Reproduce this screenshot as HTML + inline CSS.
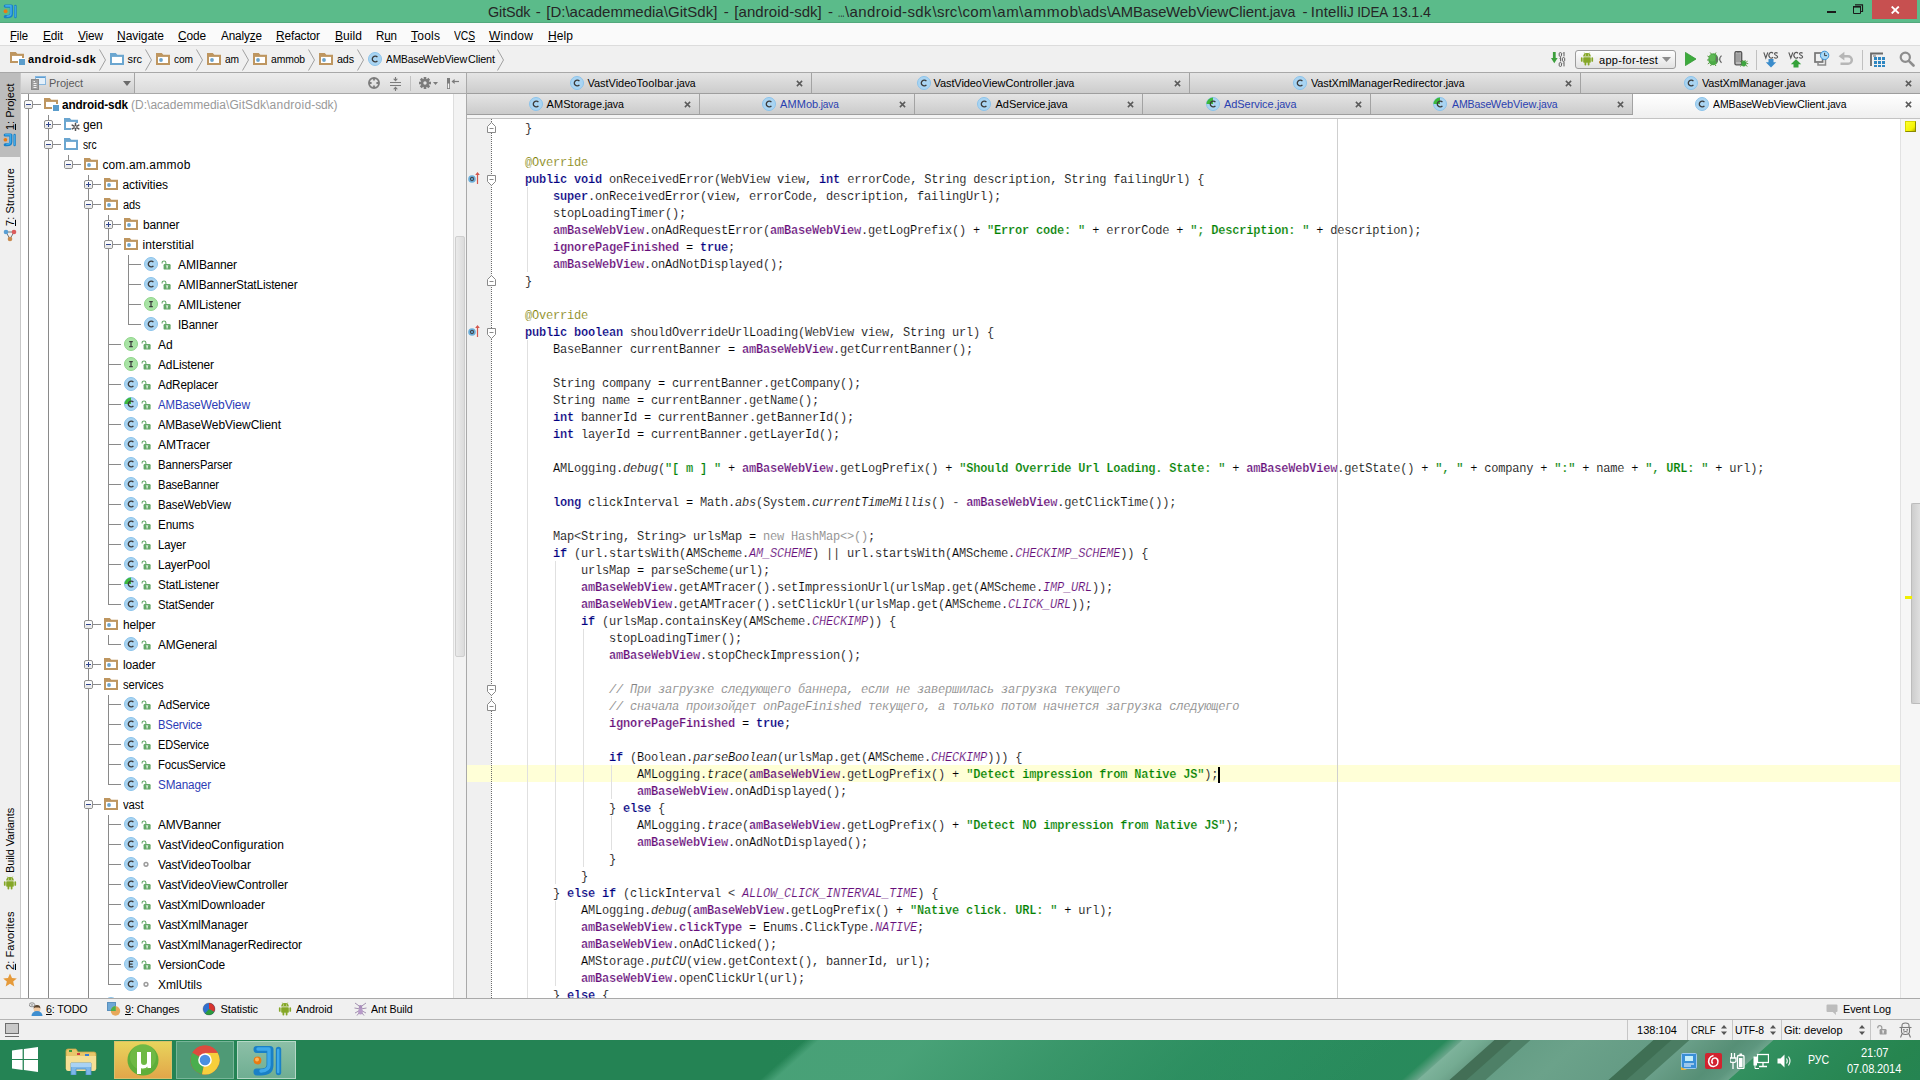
<!DOCTYPE html>
<html><head><meta charset="utf-8"><title>IntelliJ IDEA</title>
<style>
html,body{margin:0;padding:0;overflow:hidden}
body{width:1920px;height:1080px;position:relative;overflow:hidden;background:#f0f0f0;font-family:"Liberation Sans",sans-serif;font-size:12px;color:#000}
div,span.t,svg{position:absolute}
span.t{white-space:pre}
u{text-decoration:underline;text-underline-offset:1px}
.tab{border-right:1px solid #9b9b9b;background:linear-gradient(#e6e6e6,#cdcdcd);box-sizing:border-box}
.gl{background:#e0e0e0;width:1px}
.k,.s,.f{font-weight:bold;-webkit-text-stroke:0.22px #fff}.cr,.cr span{-webkit-text-stroke-color:#ffffd7}.k{color:#000080}.s{color:#008000}.f{color:#660e7a}
.c{color:#660e7a;font-style:italic}.i{font-style:italic}.a{color:#808000}.g{color:#808080}.cm{color:#808080;font-style:italic}
.cl{-webkit-text-stroke:0.15px #fff;left:497px;height:17px;line-height:17px;font-family:"Liberation Mono",monospace;font-size:12px;letter-spacing:-0.2px;white-space:pre;color:#000}
</style>
</head>
<body>
<svg width="0" height="0" style="left:0;top:0"><defs><symbol id="ic" viewBox="0 0 14 14"><circle cx="7" cy="7" r="6.5" fill="#a9d4f2" stroke="#8cc3ea" stroke-width="1"/><path d="M9.4 5.1A2.9 2.9 0 1 0 9.4 8.9" fill="none" stroke="#3b3b3b" stroke-width="1.35"/></symbol><symbol id="icg" viewBox="0 0 14 14"><circle cx="7" cy="7" r="6.5" fill="#a9d4f2" stroke="#8cc3ea" stroke-width="1"/><path d="M7 7L0.5 7A6.5 6.5 0 0 1 7 0.5Z" fill="#3cb93c"/><path d="M9.4 5.1A2.9 2.9 0 1 0 9.4 8.9" fill="none" stroke="#3b3b3b" stroke-width="1.35"/></symbol><symbol id="ii" viewBox="0 0 14 14"><circle cx="7" cy="7" r="6.5" fill="#a9e3a5" stroke="#8fd58a" stroke-width="1"/><path d="M5.2 4.6H8.8M7 4.6V9.6M5.2 9.6H8.8" fill="none" stroke="#3b3b3b" stroke-width="1.2"/></symbol><symbol id="ie" viewBox="0 0 14 14"><circle cx="7" cy="7" r="6.5" fill="#a9d4f2" stroke="#8cc3ea" stroke-width="1"/><path d="M9.2 4.4H5.4V9.8H9.2M5.4 7.1H8.6" fill="none" stroke="#3b3b3b" stroke-width="1.25"/></symbol><symbol id="lk" viewBox="0 0 10 10"><path d="M1.1 3.4V2.8A1.9 1.9 0 0 1 4.9 2.8V4.2" fill="none" stroke="#62a866" stroke-width="1.05"/><rect x="2.6" y="4" width="7" height="5.6" rx="1.2" fill="#62a866"/><path d="M4.6 5.5H7.6L6.6 6.6V8.4H5.6V6.6Z" fill="#fff"/></symbol><symbol id="dot" viewBox="0 0 10 10"><circle cx="5" cy="5.3" r="1.9" fill="#fff" stroke="#9c9c9c" stroke-width="1.5"/></symbol><symbol id="fp" viewBox="0 0 14 12"><path d="M0 0H5.8L7.3 1.8H14V12H0Z" fill="#be9660"/><path d="M2 3.9H12V10H2Z" fill="#fff"/><circle cx="5" cy="7" r="1.9" fill="#6aa3cc"/></symbol><symbol id="fs" viewBox="0 0 14 12"><path d="M0 0H5.8L7.3 1.8H14V12H0Z" fill="#6ba6d0"/><path d="M2 3.9H12V10H2Z" fill="#fff"/></symbol><symbol id="fg" viewBox="0 0 16 13"><path d="M0 0H5.8L7.3 1.8H14V12H0Z" fill="#6ba6d0"/><path d="M2 3.9H12V10H2Z" fill="#fff"/><rect x="7" y="5" width="9" height="8" fill="#fff"/><path d="M12 2H14V5H12Z" fill="#6ba6d0"/><g stroke="#555" stroke-width="1.5" fill="none" stroke-linecap="round"><path d="M11.5 5.2V12.8M8.2 7.1L14.8 10.9M14.8 7.1L8.2 10.9"/></g><circle cx="11.5" cy="9" r="1" fill="#e8e8e8"/></symbol><symbol id="fm" viewBox="0 0 15 13"><path d="M0 0H5.8L7.3 1.8H14V11H0Z" fill="#be9660"/><path d="M2 3.9H12V9H2Z" fill="#fff"/><rect x="8" y="6" width="7" height="7" fill="#fff"/><rect x="9" y="7" width="6" height="6" fill="#5b9dcb"/></symbol><symbol id="bm" viewBox="0 0 9 9"><rect x="0.5" y="0.5" width="8" height="8" rx="1.5" fill="#fbfbfb" stroke="#8e8e8e"/><rect x="1" y="5" width="7" height="3" fill="#e9e9e9"/><path d="M2 4.5H7" stroke="#31468f" stroke-width="1"/></symbol><symbol id="bp" viewBox="0 0 9 9"><rect x="0.5" y="0.5" width="8" height="8" rx="1.5" fill="#fbfbfb" stroke="#8e8e8e"/><rect x="1" y="5" width="7" height="3" fill="#e9e9e9"/><path d="M2 4.5H7M4.5 2V7" stroke="#31468f" stroke-width="1"/></symbol><symbol id="cx" viewBox="0 0 8 8"><path d="M1 1L7 7M7 1L1 7" stroke="#5a5a5a" stroke-width="1.7"/></symbol><symbol id="fe" viewBox="0 0 9 11"><path d="M0.5 10.5V4.5L4.5 0.5L8.5 4.5V10.5Z" fill="#fff" stroke="#8a8a8a"/><path d="M2.5 6.5H6.5" stroke="#8a8a8a"/></symbol><symbol id="fb" viewBox="0 0 9 11"><path d="M0.5 0.5V6.5L4.5 10.5L8.5 6.5V0.5Z" fill="#fff" stroke="#8a8a8a"/><path d="M2.5 4.5H6.5" stroke="#8a8a8a"/></symbol><symbol id="ov" viewBox="0 0 13 13"><circle cx="4" cy="8" r="3.8" fill="#6db0dc"/><circle cx="4" cy="8" r="1.6" fill="none" stroke="#45484d" stroke-width="1.1"/><path d="M9.5 13V2" stroke="#d3574d" stroke-width="1.2"/><path d="M7.2 4L9.5 1L11.8 4Z" fill="#d3574d"/></symbol><symbol id="ud" viewBox="0 0 6 10"><path d="M3 0L6 3.6H0ZM3 10L0 6.4H6Z" fill="#555"/></symbol><symbol id="an" viewBox="0 0 14 14"><g fill="#85a727"><path d="M3.2 4.6A3.8 3.6 0 0 1 10.8 4.6Z"/><rect x="3.2" y="5.2" width="7.6" height="5.6" rx="0.8"/><rect x="0.9" y="5.2" width="1.7" height="4.6" rx="0.85"/><rect x="11.4" y="5.2" width="1.7" height="4.6" rx="0.85"/><rect x="4.5" y="10" width="1.8" height="3.4" rx="0.85"/><rect x="7.7" y="10" width="1.8" height="3.4" rx="0.85"/><path d="M4.3 0.6L5.3 2.2M9.7 0.6L8.7 2.2" stroke="#85a727" stroke-width="0.7"/></g><circle cx="5.4" cy="3" r="0.5" fill="#fff"/><circle cx="8.6" cy="3" r="0.5" fill="#fff"/></symbol><symbol id="ji" viewBox="0 0 32 32"><g fill="none" stroke="#1a80c6" stroke-linecap="round" stroke-linejoin="round"><path d="M5 4.5H18V20Q18 27 9 27H5" stroke-width="7"/><path d="M26.5 4.5V27.5" stroke-width="5.4"/></g><g fill="none" stroke="#3fa9ea" stroke-linecap="round" stroke-linejoin="round"><path d="M6 4H17V20Q17 25.5 9 26" stroke-width="3.4"/><path d="M26.2 5V27" stroke-width="2.4"/></g><circle cx="5.5" cy="15.5" r="4.2" fill="#e97a12"/></symbol></defs></svg>
<div style="left:0px;top:0px;width:1920px;height:23px;background:#5bbb8a;"></div>
<div style="left:0px;top:22px;width:1920px;height:1px;background:#52a87c;"></div>
<svg style="left:2.5px;top:3.5px" width="15" height="15" ><use href="#ji"/></svg>
<span class="t" style="left:488.3px;top:1.5px;transform-origin:0 0;transform:scaleX(0.9582);line-height:20px;font-size:15px;color:#262626;letter-spacing:-0.120px;">GitSdk</span>
<span class="t" style="left:535.8px;top:1.5px;line-height:20px;font-size:15px;color:#262626;">-</span>
<span class="t" style="left:546.3px;top:1.5px;line-height:20px;font-size:15px;color:#262626;letter-spacing:-0.012px;">[D:\academmedia</span>
<span class="t" style="left:663.683328307414px;top:1.5px;line-height:20px;font-size:15px;color:#262626;letter-spacing:0.061px;">\GitSdk]</span>
<span class="t" style="left:723.8px;top:1.5px;line-height:20px;font-size:15px;color:#262626;">-</span>
<span class="t" style="left:734.2px;top:1.5px;line-height:20px;font-size:15px;color:#262626;letter-spacing:0.094px;">[android</span>
<span class="t" style="left:789.1267971705873px;top:1.5px;line-height:20px;font-size:15px;color:#262626;letter-spacing:0.013px;">-sdk]</span>
<span class="t" style="left:828px;top:1.5px;line-height:20px;font-size:15px;color:#262626;">-</span>
<span class="t" style="left:837.5px;top:1.5px;transform-origin:0 0;transform:scaleX(0.5321);line-height:20px;font-size:15px;color:#262626;letter-spacing:-0.120px;">...</span>
<span class="t" style="left:845px;top:1.5px;line-height:20px;font-size:15px;color:#262626;letter-spacing:0.361px;">\android-sdk</span>
<span class="t" style="left:932.5px;top:1.5px;line-height:20px;font-size:15px;color:#262626;letter-spacing:0.237px;">\src</span>
<span class="t" style="left:958px;top:1.5px;line-height:20px;font-size:15px;color:#262626;letter-spacing:0.338px;">\com</span>
<span class="t" style="left:992.5px;top:1.5px;line-height:20px;font-size:15px;color:#262626;letter-spacing:0.594px;">\am</span>
<span class="t" style="left:1019px;top:1.5px;transform-origin:0 0;transform:scaleX(1.0315);line-height:20px;font-size:15px;color:#262626;letter-spacing:0.600px;">\ammob</span>
<span class="t" style="left:1078.3px;top:1.5px;line-height:20px;font-size:15px;color:#262626;letter-spacing:0.012px;">\ads</span>
<span class="t" style="left:1106.7px;top:1.5px;transform-origin:0 0;transform:scaleX(0.9877);line-height:20px;font-size:15px;color:#262626;letter-spacing:-0.120px;">\AMBase</span>
<span class="t" style="left:1166.0385794087981px;top:1.5px;line-height:20px;font-size:15px;color:#262626;letter-spacing:-0.068px;">WebView</span>
<span class="t" style="left:1228.4068081309645px;top:1.5px;line-height:20px;font-size:15px;color:#262626;letter-spacing:-0.063px;">Client</span>
<span class="t" style="left:1266.420470944216px;top:1.5px;transform-origin:0 0;transform:scaleX(0.9432);line-height:20px;font-size:15px;color:#262626;letter-spacing:-0.120px;">.java</span>
<span class="t" style="left:1302.5px;top:1.5px;line-height:20px;font-size:15px;color:#262626;">-</span>
<span class="t" style="left:1310.8px;top:1.5px;line-height:20px;font-size:15px;color:#262626;letter-spacing:0.181px;">Intelli</span>
<span class="t" style="left:1347.0083409325794px;top:1.5px;transform-origin:0 0;transform:scaleX(0.8937);line-height:20px;font-size:15px;color:#262626;letter-spacing:-0.120px;">J IDEA</span>
<span class="t" style="left:1388.141893124202px;top:1.5px;transform-origin:0 0;transform:scaleX(0.9504);line-height:20px;font-size:15px;color:#262626;letter-spacing:-0.120px;"> 13.1.4</span>
<div style="left:1827px;top:11px;width:9px;height:2px;background:#1a1a1a;"></div>
<svg style="left:1852px;top:4px" width="12" height="11"><path d="M1 2.5H8.5V9.5H1.5V2.5" fill="none" stroke="#1a1a1a" stroke-width="1"/><path d="M1 2.8H9" stroke="#1a1a1a" stroke-width="1.6"/><path d="M3 0.8H10.5V7.5H9" fill="none" stroke="#1a1a1a" stroke-width="1.2"/></svg>
<div style="left:1872px;top:0px;width:45px;height:19px;background:#c75050;"></div>
<svg style="left:1891px;top:5.5px" width="9" height="8"><path d="M0.7 0.5L7.8 7.5M7.8 0.5L0.7 7.5" stroke="#fff" stroke-width="1.8"/></svg>
<div style="left:0px;top:23px;width:1920px;height:23px;background:#fafafa;"></div>
<div style="left:0px;top:45px;width:1920px;height:1px;background:#dcdcdc;"></div>
<span class="t" style="left:10px;top:28px;transform-origin:0 0;transform:scaleX(0.9504);line-height:16px;letter-spacing:-0.120px;"><u>F</u>ile</span>
<span class="t" style="left:43px;top:28px;transform-origin:0 0;transform:scaleX(0.9860);line-height:16px;letter-spacing:-0.120px;"><u>E</u>dit</span>
<span class="t" style="left:78px;top:28px;transform-origin:0 0;transform:scaleX(0.9845);line-height:16px;letter-spacing:-0.120px;"><u>V</u>iew</span>
<span class="t" style="left:117px;top:28px;line-height:16px;letter-spacing:-0.050px;"><u>N</u>avigate</span>
<span class="t" style="left:178px;top:28px;transform-origin:0 0;transform:scaleX(0.9900);line-height:16px;letter-spacing:-0.120px;"><u>C</u>ode</span>
<span class="t" style="left:221px;top:28px;transform-origin:0 0;transform:scaleX(0.9776);line-height:16px;letter-spacing:-0.120px;">Analy<u>z</u>e</span>
<span class="t" style="left:276px;top:28px;transform-origin:0 0;transform:scaleX(0.9897);line-height:16px;letter-spacing:-0.120px;"><u>R</u>efactor</span>
<span class="t" style="left:335px;top:28px;line-height:16px;letter-spacing:0.066px;"><u>B</u>uild</span>
<span class="t" style="left:376px;top:28px;transform-origin:0 0;transform:scaleX(0.9657);line-height:16px;letter-spacing:-0.120px;">R<u>u</u>n</span>
<span class="t" style="left:411px;top:28px;line-height:16px;letter-spacing:0.219px;"><u>T</u>ools</span>
<span class="t" style="left:454px;top:28px;transform-origin:0 0;transform:scaleX(0.8611);line-height:16px;letter-spacing:-0.120px;">VC<u>S</u></span>
<span class="t" style="left:489px;top:28px;line-height:16px;letter-spacing:0.239px;"><u>W</u>indow</span>
<span class="t" style="left:548px;top:28px;line-height:16px;letter-spacing:0.089px;"><u>H</u>elp</span>
<div style="left:0px;top:46px;width:1920px;height:26px;background:#f0f0f0;"></div>
<div style="left:0px;top:72px;width:1920px;height:1px;background:#a8a8a8;"></div>
<svg style="left:10px;top:52px" width="15" height="13" ><use href="#fm"/></svg>
<span class="t" style="left:28px;top:51px;line-height:16px;font-size:11px;font-weight:bold;letter-spacing:0.481px;">android-sdk</span>
<svg style="left:99px;top:49px" width="8" height="22"><path d="M0.5 0.5L6.5 11L0.5 21.5" fill="none" stroke="#a0a0a0"/></svg>
<svg style="left:110px;top:53px" width="14" height="12" ><use href="#fs"/></svg>
<span class="t" style="left:127.5px;top:51px;line-height:16px;font-size:11px;letter-spacing:-0.069px;">src</span>
<svg style="left:145px;top:49px" width="8" height="22"><path d="M0.5 0.5L6.5 11L0.5 21.5" fill="none" stroke="#a0a0a0"/></svg>
<svg style="left:156px;top:53px" width="14" height="12" ><use href="#fp"/></svg>
<span class="t" style="left:173.5px;top:51px;transform-origin:0 0;transform:scaleX(0.9277);line-height:16px;font-size:11px;letter-spacing:-0.120px;">com</span>
<svg style="left:196px;top:49px" width="8" height="22"><path d="M0.5 0.5L6.5 11L0.5 21.5" fill="none" stroke="#a0a0a0"/></svg>
<svg style="left:207px;top:53px" width="14" height="12" ><use href="#fp"/></svg>
<span class="t" style="left:224.5px;top:51px;transform-origin:0 0;transform:scaleX(0.9271);line-height:16px;font-size:11px;letter-spacing:-0.120px;">am</span>
<svg style="left:242px;top:49px" width="8" height="22"><path d="M0.5 0.5L6.5 11L0.5 21.5" fill="none" stroke="#a0a0a0"/></svg>
<svg style="left:253px;top:53px" width="14" height="12" ><use href="#fp"/></svg>
<span class="t" style="left:270.5px;top:51px;transform-origin:0 0;transform:scaleX(0.9406);line-height:16px;font-size:11px;letter-spacing:-0.120px;">ammob</span>
<svg style="left:308px;top:49px" width="8" height="22"><path d="M0.5 0.5L6.5 11L0.5 21.5" fill="none" stroke="#a0a0a0"/></svg>
<svg style="left:319px;top:53px" width="14" height="12" ><use href="#fp"/></svg>
<span class="t" style="left:336.5px;top:51px;transform-origin:0 0;transform:scaleX(0.9742);line-height:16px;font-size:11px;letter-spacing:-0.120px;">ads</span>
<svg style="left:356.5px;top:49px" width="8" height="22"><path d="M0.5 0.5L6.5 11L0.5 21.5" fill="none" stroke="#a0a0a0"/></svg>
<svg style="left:368px;top:52px" width="14" height="14" ><use href="#ic"/></svg>
<span class="t" style="left:385.5px;top:51px;transform-origin:0 0;transform:scaleX(0.9278);line-height:16px;font-size:11px;letter-spacing:-0.120px;">AMBase</span>
<span class="t" style="left:423.463375720341px;top:51px;transform-origin:0 0;transform:scaleX(0.9747);line-height:16px;font-size:11px;letter-spacing:-0.120px;">WebView</span>
<span class="t" style="left:467.59910939658045px;top:51px;transform-origin:0 0;transform:scaleX(0.9795);line-height:16px;font-size:11px;letter-spacing:-0.120px;">Client</span>
<svg style="left:497px;top:49px" width="8" height="22"><path d="M0.5 0.5L6.5 11L0.5 21.5" fill="none" stroke="#a0a0a0"/></svg>
<svg style="left:1551px;top:52px" width="16" height="15"><path d="M3.3 0V7" stroke="#3c9f3c" stroke-width="2.8"/><path d="M0 6H6.6L3.3 11.3Z" fill="#3c9f3c"/><g fill="none" stroke="#555" stroke-width="0.95"><rect x="8.2" y="0.6" width="2.3" height="3.8" rx="1" /><path d="M12.1 1.4L13 0.4V4.4"/><path d="M8.7 6.4L9.6 5.4V9.4"/><rect x="11.4" y="5.6" width="2.3" height="3.8" rx="1" /><rect x="8.2" y="10.6" width="2.3" height="3.8" rx="1" /><path d="M12.1 11.4L13 10.4V14.4"/></g></svg>
<div style="left:1575px;top:50px;width:101px;height:19px;border:1px solid #9c9c9c;border-radius:3px;background:linear-gradient(#fefefe,#e2e2e2);box-sizing:border-box"></div>
<svg style="left:1580px;top:52px" width="14" height="14" ><use href="#an"/></svg>
<span class="t" style="left:1599px;top:52px;line-height:16px;font-size:11px;letter-spacing:0.282px;">app-for</span>
<span class="t" style="left:1635.6954499863225px;top:52px;line-height:16px;font-size:11px;letter-spacing:0.200px;">-test</span>
<svg style="left:1662px;top:57px" width="9" height="5"><path d="M0 0H9L4.5 5Z" fill="#8c8c8c"/></svg>
<svg style="left:1685px;top:52px" width="12" height="14"><path d="M0.4 0.4L11 7L0.4 13.6Z" fill="#3dab3d" stroke="#2f962f" stroke-width="0.8"/></svg>
<svg style="left:1707px;top:51px" width="17" height="16"><g stroke="#5a8f3e" stroke-width="1" fill="none"><path d="M3.2 1.5L4.8 3.5M9 1.5L7.6 3.5M0.5 5L2.5 6.2M0 9H2M0.8 13L2.6 11.5M3.5 15L4.6 13.2M9 15L7.8 13.4"/></g><ellipse cx="6.3" cy="8.2" rx="5" ry="6" fill="#4caa46"/><ellipse cx="5.3" cy="7" rx="3" ry="3.6" fill="#6cc25f" opacity=".6"/><path d="M9.3 4.2Q12.6 8.2 9.3 12.2Q8 8.2 9.3 4.2Z" fill="#6a6a6a"/><path d="M14.5 4.6Q10.8 8.2 14.5 11.8" stroke="#5f5f5f" stroke-width="1.2" fill="none"/></svg>
<svg style="left:1734px;top:51px" width="15" height="17"><rect x="0.9" y="0.6" width="6.8" height="13.2" rx="1.4" fill="#b8b8b8" stroke="#555" stroke-width="1.3"/><rect x="2" y="2.6" width="4.6" height="8.4" fill="#9e9e9e"/><path d="M3 1.6H5.6" stroke="#666" stroke-width="0.6"/><ellipse cx="9.8" cy="12.6" rx="2.5" ry="2.8" fill="#3fa540"/><path d="M6.2 10.4L7.8 11.4M13.6 10.2L12 11.3M6.2 15.4L7.8 14.2M13.4 15.4L11.8 14.2M12.4 12.6H14.2M8.4 9L9 10M11.4 9L10.8 10" stroke="#4b8b2e" stroke-width="0.9"/></svg>
<div style="left:1756px;top:50px;width:1px;height:20px;background:#c0c0c0;"></div>
<svg style="left:1763px;top:51px" width="17" height="17"><g fill="none" stroke="#595959" stroke-width="1.15" transform="translate(0.6,1.4)"><path d="M0.2 0L2.2 5.6L4.2 0"/><path d="M9.4 1A2.3 2.9 0 1 0 9.4 4.8"/><path d="M14 0.9Q12.6 -0.3 11.4 0.5Q10.1 1.8 12.4 2.9Q14.8 4 13.6 5.2Q12.4 6.2 10.5 5"/></g><path d="M8 8V12" stroke="#3b8ccb" stroke-width="5"/><path d="M2.8 11.3H13.2L8 16.5Z" fill="#3b8ccb"/></svg>
<svg style="left:1788px;top:51px" width="17" height="17"><g fill="none" stroke="#595959" stroke-width="1.15" transform="translate(0.6,1.4)"><path d="M0.2 0L2.2 5.6L4.2 0"/><path d="M9.4 1A2.3 2.9 0 1 0 9.4 4.8"/><path d="M14 0.9Q12.6 -0.3 11.4 0.5Q10.1 1.8 12.4 2.9Q14.8 4 13.6 5.2Q12.4 6.2 10.5 5"/></g><path d="M8 16.5V12.5" stroke="#35a23a" stroke-width="5"/><path d="M2.8 13.3H13.2L8 8.2Z" fill="#35a23a"/></svg>
<svg style="left:1814px;top:50px" width="17" height="17"><rect x="1" y="3" width="7.6" height="9" fill="none" stroke="#757575" stroke-width="1.7"/><path d="M4 12.5V15H11.5V9" fill="none" stroke="#8a8a8a" stroke-width="1.5"/><circle cx="10.6" cy="5.4" r="4.2" fill="#a9d9f7" stroke="#3d93d6" stroke-width="1"/><path d="M10.6 2.8V5.6H13" stroke="#333" stroke-width="0.9" fill="none"/></svg>
<svg style="left:1838px;top:51px" width="16" height="16"><path d="M5 5.2H10A3.7 3.7 0 0 1 10 12.8H2.5" fill="none" stroke="#b6b6b6" stroke-width="2.5"/><path d="M0.6 5.2L6.4 0.8V9.6Z" fill="#b6b6b6"/></svg>
<div style="left:1862px;top:50px;width:1px;height:20px;background:#c0c0c0;"></div>
<svg style="left:1870px;top:52px" width="16" height="15"><path d="M1 14V1.5H13" fill="none" stroke="#6a6a6a" stroke-width="1.8"/><g fill="#2e86c1"><rect x="4" y="5" width="3" height="3"/><rect x="8" y="5" width="3" height="3"/><rect x="12" y="5" width="3" height="3"/><rect x="4" y="9" width="3" height="3"/><rect x="8" y="9" width="3" height="3"/><rect x="12" y="9" width="3" height="3"/><rect x="4" y="13" width="3" height="2"/><rect x="8" y="13" width="3" height="2"/><rect x="12" y="13" width="3" height="2"/></g><path d="M3 4H6" stroke="#6a6a6a" stroke-width="1"/></svg>
<svg style="left:1899px;top:51px" width="16" height="16"><circle cx="6.3" cy="6.3" r="4.6" fill="none" stroke="#8e8e8e" stroke-width="2.2"/><path d="M9.8 9.8L14.5 14.5" stroke="#8e8e8e" stroke-width="2.6" stroke-linecap="round"/></svg>
<div style="left:0px;top:73px;width:21px;height:925px;background:#f0f0f0;"></div>
<div style="left:0px;top:73px;width:20px;height:84px;background:#bdbdbd;"></div>
<div style="left:20px;top:73px;width:1px;height:925px;background:#c9c9c9;"></div>
<span class="t" style="left:10px;top:130px;transform-origin:0 0;transform:rotate(-90deg) translateY(-50%);line-height:16px;font-size:11px;"><u>1</u>: Project</span>
<svg style="left:3px;top:133px" width="14" height="14"><use href="#ji"/></svg>
<span class="t" style="left:10px;top:226px;transform-origin:0 0;transform:rotate(-90deg) translateY(-50%);line-height:16px;font-size:11px;letter-spacing:0.087px;"><u>7</u>: Structure</span>
<svg style="left:3px;top:229px" width="14" height="13"><path d="M3 3L11 3L7 10Z" fill="none" stroke="#666" stroke-width="0.9"/><circle cx="3" cy="3" r="2.3" fill="#5a9fd4"/><circle cx="11" cy="3" r="2.3" fill="#dc5b5b"/><circle cx="7" cy="10" r="2.3" fill="#c98b4f"/></svg>
<span class="t" style="left:10px;top:873px;transform-origin:0 0;transform:rotate(-90deg) translateY(-50%) scaleX(0.9942);line-height:16px;font-size:11px;letter-spacing:-0.120px;">Build Variants</span>
<svg style="left:3px;top:876px" width="14" height="14"><use href="#an"/></svg>
<span class="t" style="left:10px;top:970px;transform-origin:0 0;transform:rotate(-90deg) translateY(-50%);line-height:16px;font-size:11px;letter-spacing:0.087px;"><u>2</u>: Favorites</span>
<svg style="left:3px;top:973px" width="14" height="14"><path d="M7 0.5L9 5L13.8 5.4L10.2 8.6L11.3 13.4L7 10.8L2.7 13.4L3.8 8.6L0.2 5.4L5 5Z" fill="#e59a3a"/></svg>
<div style="left:21px;top:73px;width:446px;height:21px;background:linear-gradient(#ececec,#dadada);"></div>
<div style="left:21px;top:93px;width:446px;height:1px;background:#a9a9a9;"></div>
<div style="left:21px;top:73px;width:113px;height:20px;background:linear-gradient(#ededed,#cfcfcf);border-right:1px solid #a5a5a5"></div>
<svg style="left:31px;top:76px" width="15" height="14"><rect x="4.5" y="0.5" width="10" height="8" fill="#e4f0fa" stroke="#86b6de"/><path d="M5 1.5H14" stroke="#5f9fd3"/><rect x="0.5" y="3.5" width="7" height="10" fill="#9d9d9d" stroke="#8b8b8b"/><path d="M2.5 7.5H5.5M2.5 9.5H5.5M2.5 11.5H5.5" stroke="#f2f2f2"/><path d="M2.5 5.5H4" stroke="#f2f2f2"/></svg>
<span class="t" style="left:49px;top:75px;line-height:16px;font-size:11px;color:#5a5a5a;letter-spacing:-0.038px;">Project</span>
<svg style="left:123px;top:81px" width="8" height="5"><path d="M0 0H8L4 5Z" fill="#6b6b6b"/></svg>
<svg style="left:368px;top:77px" width="12" height="12"><circle cx="6" cy="6" r="5" fill="none" stroke="#7c7c7c" stroke-width="1.9"/><path d="M6 1V3.6M6 8.4V11M1 6H3.6M8.4 6H11" stroke="#7c7c7c" stroke-width="1.8"/></svg>
<svg style="left:390px;top:76px" width="12" height="16"><path d="M0 6.5H11M0 9.5H11" stroke="#7c7c7c" stroke-width="1"/><path d="M5.5 1V4M5.5 15V12" stroke="#7c7c7c" stroke-width="1.1"/><path d="M3 2.8H8L5.5 5.6ZM3 13.2H8L5.5 10.4Z" fill="#7c7c7c"/></svg>
<div style="left:410px;top:76px;width:1px;height:15px;background:#c2c2c2;"></div>
<svg style="left:419px;top:77px" width="20" height="12"><g transform="translate(6,6)"><g fill="#7c7c7c"><rect x="-1.3" y="-6" width="2.6" height="12"/><rect x="-1.3" y="-6" width="2.6" height="12" transform="rotate(45)"/><rect x="-1.3" y="-6" width="2.6" height="12" transform="rotate(90)"/><rect x="-1.3" y="-6" width="2.6" height="12" transform="rotate(135)"/><circle r="4.2"/></g><circle r="1.7" fill="#e4e4e4"/></g><path d="M14 5H19L16.5 8Z" fill="#7c7c7c"/></svg>
<svg style="left:446px;top:77px" width="14" height="12"><rect x="1" y="1" width="3" height="11" fill="#7c7c7c"/><rect x="1.8" y="6.5" width="1.4" height="4.7" fill="#f4f4f4"/><path d="M13 4.5H6.5" stroke="#7c7c7c" stroke-width="1.2"/><path d="M5.5 4.5L8.6 2V7Z" fill="#7c7c7c"/></svg>
<div style="left:21px;top:94px;width:432px;height:904px;background:#fff;"></div>
<div style="left:453px;top:94px;width:14px;height:904px;background:#f3f3f3;"></div>
<div style="left:453px;top:94px;width:1px;height:904px;background:#dedede;"></div>
<div style="left:466px;top:73px;width:1px;height:925px;background:#a9a9a9;"></div>
<div style="left:455px;top:236px;width:10px;height:421px;background:linear-gradient(90deg,#eaeaea,#dcdcdc);border:1px solid #cfcfcf;border-radius:2px;box-sizing:border-box"></div>
<div style="left:28px;top:94px;width:1px;height:904px;background:#8a8a8a;"></div>
<div style="left:48px;top:115px;width:1px;height:883px;background:#8a8a8a;"></div>
<div style="left:68px;top:155px;width:1px;height:10px;background:#8a8a8a;"></div>
<div style="left:88px;top:175px;width:1px;height:823px;background:#8a8a8a;"></div>
<div style="left:108px;top:215px;width:1px;height:390px;background:#8a8a8a;"></div>
<div style="left:128px;top:255px;width:1px;height:70px;background:#8a8a8a;"></div>
<div style="left:108px;top:635px;width:1px;height:10px;background:#8a8a8a;"></div>
<div style="left:108px;top:695px;width:1px;height:90px;background:#8a8a8a;"></div>
<div style="left:108px;top:815px;width:1px;height:170px;background:#8a8a8a;"></div>
<svg style="left:24px;top:100px" width="9" height="9" ><use href="#bm"/></svg>
<div style="left:33px;top:104px;width:8px;height:1px;background:#8a8a8a;"></div>
<svg style="left:44px;top:98px" width="15" height="13" ><use href="#fm"/></svg>
<span class="t" style="left:62px;top:95.5px;transform-origin:0 0;transform:scaleX(0.9791);line-height:18px;font-weight:bold;letter-spacing:-0.120px;">android-sdk</span>
<span class="t" style="left:131px;top:95.5px;line-height:18px;color:#999;letter-spacing:0.019px;">(D:\academmedia</span>
<span class="t" style="left:226px;top:95.5px;line-height:18px;color:#999;letter-spacing:0.099px;">\GitSdk</span>
<span class="t" style="left:266px;top:95.5px;line-height:18px;color:#999;letter-spacing:0.247px;">\android</span>
<span class="t" style="left:311.2245047093212px;top:95.5px;line-height:18px;color:#999;letter-spacing:-0.088px;">-sdk)</span>
<svg style="left:44px;top:120px" width="9" height="9" ><use href="#bp"/></svg>
<div style="left:53px;top:124px;width:8px;height:1px;background:#8a8a8a;"></div>
<svg style="left:64px;top:118px" width="16" height="13" ><use href="#fg"/></svg>
<span class="t" style="left:82.5px;top:115.5px;transform-origin:0 0;transform:scaleX(0.9883);line-height:18px;letter-spacing:-0.120px;">gen</span>
<svg style="left:44px;top:140px" width="9" height="9" ><use href="#bm"/></svg>
<div style="left:53px;top:144px;width:8px;height:1px;background:#8a8a8a;"></div>
<svg style="left:64px;top:138px" width="14" height="12" ><use href="#fs"/></svg>
<span class="t" style="left:82.5px;top:135.5px;transform-origin:0 0;transform:scaleX(0.8599);line-height:18px;letter-spacing:-0.120px;">src</span>
<svg style="left:64px;top:160px" width="9" height="9" ><use href="#bm"/></svg>
<div style="left:73px;top:164px;width:8px;height:1px;background:#8a8a8a;"></div>
<svg style="left:84px;top:158px" width="14" height="12" ><use href="#fp"/></svg>
<span class="t" style="left:102.5px;top:155.5px;line-height:18px;letter-spacing:0.097px;">com.am</span>
<span class="t" style="left:145.72086479066576px;top:155.5px;line-height:18px;letter-spacing:0.258px;">.ammob</span>
<svg style="left:84px;top:180px" width="9" height="9" ><use href="#bp"/></svg>
<div style="left:93px;top:184px;width:8px;height:1px;background:#8a8a8a;"></div>
<svg style="left:104px;top:178px" width="14" height="12" ><use href="#fp"/></svg>
<span class="t" style="left:122.5px;top:175.5px;line-height:18px;letter-spacing:-0.054px;">activities</span>
<svg style="left:84px;top:200px" width="9" height="9" ><use href="#bm"/></svg>
<div style="left:93px;top:204px;width:8px;height:1px;background:#8a8a8a;"></div>
<svg style="left:104px;top:198px" width="14" height="12" ><use href="#fp"/></svg>
<span class="t" style="left:122.5px;top:195.5px;transform-origin:0 0;transform:scaleX(0.9182);line-height:18px;letter-spacing:-0.120px;">ads</span>
<svg style="left:104px;top:220px" width="9" height="9" ><use href="#bp"/></svg>
<div style="left:113px;top:224px;width:8px;height:1px;background:#8a8a8a;"></div>
<svg style="left:124px;top:218px" width="14" height="12" ><use href="#fp"/></svg>
<span class="t" style="left:142.5px;top:215.5px;transform-origin:0 0;transform:scaleX(0.9941);line-height:18px;letter-spacing:-0.120px;">banner</span>
<svg style="left:104px;top:240px" width="9" height="9" ><use href="#bm"/></svg>
<div style="left:113px;top:244px;width:8px;height:1px;background:#8a8a8a;"></div>
<svg style="left:124px;top:238px" width="14" height="12" ><use href="#fp"/></svg>
<span class="t" style="left:142.5px;top:235.5px;line-height:18px;letter-spacing:0.071px;">interstitial</span>
<div style="left:129px;top:264px;width:12px;height:1px;background:#8a8a8a;"></div>
<svg style="left:144px;top:257px" width="14" height="14" ><use href="#ic"/></svg>
<svg style="left:161px;top:260px" width="10" height="10" ><use href="#lk"/></svg>
<span class="t" style="left:178px;top:255.5px;line-height:18px;letter-spacing:-0.120px;">AMIBanner</span>
<div style="left:129px;top:284px;width:12px;height:1px;background:#8a8a8a;"></div>
<svg style="left:144px;top:277px" width="14" height="14" ><use href="#ic"/></svg>
<svg style="left:161px;top:280px" width="10" height="10" ><use href="#lk"/></svg>
<span class="t" style="left:178px;top:275.5px;transform-origin:0 0;transform:scaleX(0.9904);line-height:18px;letter-spacing:-0.120px;">AMIBanner</span>
<span class="t" style="left:236.44477945825025px;top:275.5px;transform-origin:0 0;transform:scaleX(0.9823);line-height:18px;letter-spacing:-0.120px;">StatListener</span>
<div style="left:129px;top:304px;width:12px;height:1px;background:#8a8a8a;"></div>
<svg style="left:144px;top:297px" width="14" height="14" ><use href="#ii"/></svg>
<svg style="left:161px;top:300px" width="10" height="10" ><use href="#lk"/></svg>
<span class="t" style="left:178px;top:295.5px;line-height:18px;letter-spacing:-0.098px;">AMIListener</span>
<div style="left:129px;top:324px;width:12px;height:1px;background:#8a8a8a;"></div>
<svg style="left:144px;top:317px" width="14" height="14" ><use href="#ic"/></svg>
<svg style="left:161px;top:320px" width="10" height="10" ><use href="#lk"/></svg>
<span class="t" style="left:178px;top:315.5px;transform-origin:0 0;transform:scaleX(0.9697);line-height:18px;letter-spacing:-0.120px;">IBanner</span>
<div style="left:109px;top:344px;width:12px;height:1px;background:#8a8a8a;"></div>
<svg style="left:124px;top:337px" width="14" height="14" ><use href="#ii"/></svg>
<svg style="left:141px;top:340px" width="10" height="10" ><use href="#lk"/></svg>
<span class="t" style="left:158px;top:335.5px;line-height:18px;letter-spacing:-0.120px;">Ad</span>
<div style="left:109px;top:364px;width:12px;height:1px;background:#8a8a8a;"></div>
<svg style="left:124px;top:357px" width="14" height="14" ><use href="#ii"/></svg>
<svg style="left:141px;top:360px" width="10" height="10" ><use href="#lk"/></svg>
<span class="t" style="left:158px;top:355.5px;transform-origin:0 0;transform:scaleX(0.9958);line-height:18px;letter-spacing:-0.120px;">AdListener</span>
<div style="left:109px;top:384px;width:12px;height:1px;background:#8a8a8a;"></div>
<svg style="left:124px;top:377px" width="14" height="14" ><use href="#ic"/></svg>
<svg style="left:141px;top:380px" width="10" height="10" ><use href="#lk"/></svg>
<span class="t" style="left:158px;top:375.5px;transform-origin:0 0;transform:scaleX(0.9746);line-height:18px;letter-spacing:-0.120px;">AdReplacer</span>
<div style="left:109px;top:404px;width:12px;height:1px;background:#8a8a8a;"></div>
<svg style="left:124px;top:397px" width="14" height="14" ><use href="#icg"/></svg>
<svg style="left:141px;top:400px" width="10" height="10" ><use href="#lk"/></svg>
<span class="t" style="left:158px;top:395.5px;transform-origin:0 0;transform:scaleX(0.9517);line-height:18px;color:#2b3bb5;letter-spacing:-0.120px;">AMBase</span>
<span class="t" style="left:200.5416376857414px;top:395.5px;line-height:18px;color:#2b3bb5;letter-spacing:-0.120px;">WebView</span>
<div style="left:109px;top:424px;width:12px;height:1px;background:#8a8a8a;"></div>
<svg style="left:124px;top:417px" width="14" height="14" ><use href="#ic"/></svg>
<svg style="left:141px;top:420px" width="10" height="10" ><use href="#lk"/></svg>
<span class="t" style="left:158px;top:415.5px;transform-origin:0 0;transform:scaleX(0.9584);line-height:18px;letter-spacing:-0.120px;">AMBase</span>
<span class="t" style="left:200.83940562937562px;top:415.5px;line-height:18px;letter-spacing:-0.069px;">WebView</span>
<span class="t" style="left:250.6439491355908px;top:415.5px;line-height:18px;letter-spacing:-0.060px;">Client</span>
<div style="left:109px;top:444px;width:12px;height:1px;background:#8a8a8a;"></div>
<svg style="left:124px;top:437px" width="14" height="14" ><use href="#ic"/></svg>
<svg style="left:141px;top:440px" width="10" height="10" ><use href="#lk"/></svg>
<span class="t" style="left:158px;top:435.5px;line-height:18px;letter-spacing:-0.031px;">AMTracer</span>
<div style="left:109px;top:464px;width:12px;height:1px;background:#8a8a8a;"></div>
<svg style="left:124px;top:457px" width="14" height="14" ><use href="#ic"/></svg>
<svg style="left:141px;top:460px" width="10" height="10" ><use href="#lk"/></svg>
<span class="t" style="left:158px;top:455.5px;transform-origin:0 0;transform:scaleX(0.9502);line-height:18px;letter-spacing:-0.120px;">Banners</span>
<span class="t" style="left:199.7376276512176px;top:455.5px;transform-origin:0 0;transform:scaleX(0.9302);line-height:18px;letter-spacing:-0.120px;">Parser</span>
<div style="left:109px;top:484px;width:12px;height:1px;background:#8a8a8a;"></div>
<svg style="left:124px;top:477px" width="14" height="14" ><use href="#ic"/></svg>
<svg style="left:141px;top:480px" width="10" height="10" ><use href="#lk"/></svg>
<span class="t" style="left:158px;top:475.5px;transform-origin:0 0;transform:scaleX(0.9398);line-height:18px;letter-spacing:-0.120px;">BaseBanner</span>
<div style="left:109px;top:504px;width:12px;height:1px;background:#8a8a8a;"></div>
<svg style="left:124px;top:497px" width="14" height="14" ><use href="#ic"/></svg>
<svg style="left:141px;top:500px" width="10" height="10" ><use href="#lk"/></svg>
<span class="t" style="left:158px;top:495.5px;transform-origin:0 0;transform:scaleX(0.9561);line-height:18px;letter-spacing:-0.120px;">BaseWebView</span>
<div style="left:109px;top:524px;width:12px;height:1px;background:#8a8a8a;"></div>
<svg style="left:124px;top:517px" width="14" height="14" ><use href="#ic"/></svg>
<svg style="left:141px;top:520px" width="10" height="10" ><use href="#lk"/></svg>
<span class="t" style="left:158px;top:515.5px;transform-origin:0 0;transform:scaleX(0.9777);line-height:18px;letter-spacing:-0.120px;">Enums</span>
<div style="left:109px;top:544px;width:12px;height:1px;background:#8a8a8a;"></div>
<svg style="left:124px;top:537px" width="14" height="14" ><use href="#ic"/></svg>
<svg style="left:141px;top:540px" width="10" height="10" ><use href="#lk"/></svg>
<span class="t" style="left:158px;top:535.5px;transform-origin:0 0;transform:scaleX(0.9494);line-height:18px;letter-spacing:-0.120px;">Layer</span>
<div style="left:109px;top:564px;width:12px;height:1px;background:#8a8a8a;"></div>
<svg style="left:124px;top:557px" width="14" height="14" ><use href="#ic"/></svg>
<svg style="left:141px;top:560px" width="10" height="10" ><use href="#lk"/></svg>
<span class="t" style="left:158px;top:555.5px;transform-origin:0 0;transform:scaleX(0.9806);line-height:18px;letter-spacing:-0.120px;">LayerPool</span>
<div style="left:109px;top:584px;width:12px;height:1px;background:#8a8a8a;"></div>
<svg style="left:124px;top:577px" width="14" height="14" ><use href="#icg"/></svg>
<svg style="left:141px;top:580px" width="10" height="10" ><use href="#lk"/></svg>
<span class="t" style="left:158px;top:575.5px;transform-origin:0 0;transform:scaleX(0.9734);line-height:18px;letter-spacing:-0.120px;">StatListener</span>
<div style="left:109px;top:604px;width:12px;height:1px;background:#8a8a8a;"></div>
<svg style="left:124px;top:597px" width="14" height="14" ><use href="#ic"/></svg>
<svg style="left:141px;top:600px" width="10" height="10" ><use href="#lk"/></svg>
<span class="t" style="left:158px;top:595.5px;transform-origin:0 0;transform:scaleX(0.9507);line-height:18px;letter-spacing:-0.120px;">StatSender</span>
<svg style="left:84px;top:620px" width="9" height="9" ><use href="#bm"/></svg>
<div style="left:93px;top:624px;width:8px;height:1px;background:#8a8a8a;"></div>
<svg style="left:104px;top:618px" width="14" height="12" ><use href="#fp"/></svg>
<span class="t" style="left:122.5px;top:615.5px;transform-origin:0 0;transform:scaleX(0.9939);line-height:18px;letter-spacing:-0.120px;">helper</span>
<div style="left:109px;top:644px;width:12px;height:1px;background:#8a8a8a;"></div>
<svg style="left:124px;top:637px" width="14" height="14" ><use href="#ic"/></svg>
<svg style="left:141px;top:640px" width="10" height="10" ><use href="#lk"/></svg>
<span class="t" style="left:158px;top:635.5px;transform-origin:0 0;transform:scaleX(0.9886);line-height:18px;letter-spacing:-0.120px;">AMGeneral</span>
<svg style="left:84px;top:660px" width="9" height="9" ><use href="#bp"/></svg>
<div style="left:93px;top:664px;width:8px;height:1px;background:#8a8a8a;"></div>
<svg style="left:104px;top:658px" width="14" height="12" ><use href="#fp"/></svg>
<span class="t" style="left:122.5px;top:655.5px;transform-origin:0 0;transform:scaleX(0.9939);line-height:18px;letter-spacing:-0.120px;">loader</span>
<svg style="left:84px;top:680px" width="9" height="9" ><use href="#bm"/></svg>
<div style="left:93px;top:684px;width:8px;height:1px;background:#8a8a8a;"></div>
<svg style="left:104px;top:678px" width="14" height="12" ><use href="#fp"/></svg>
<span class="t" style="left:122.5px;top:675.5px;transform-origin:0 0;transform:scaleX(0.9393);line-height:18px;letter-spacing:-0.120px;">services</span>
<div style="left:109px;top:704px;width:12px;height:1px;background:#8a8a8a;"></div>
<svg style="left:124px;top:697px" width="14" height="14" ><use href="#ic"/></svg>
<svg style="left:141px;top:700px" width="10" height="10" ><use href="#lk"/></svg>
<span class="t" style="left:158px;top:695.5px;transform-origin:0 0;transform:scaleX(0.9686);line-height:18px;letter-spacing:-0.120px;">AdService</span>
<div style="left:109px;top:724px;width:12px;height:1px;background:#8a8a8a;"></div>
<svg style="left:124px;top:717px" width="14" height="14" ><use href="#ic"/></svg>
<svg style="left:141px;top:720px" width="10" height="10" ><use href="#lk"/></svg>
<span class="t" style="left:158px;top:715.5px;transform-origin:0 0;transform:scaleX(0.9336);line-height:18px;color:#2b3bb5;letter-spacing:-0.120px;">BService</span>
<div style="left:109px;top:744px;width:12px;height:1px;background:#8a8a8a;"></div>
<svg style="left:124px;top:737px" width="14" height="14" ><use href="#ic"/></svg>
<svg style="left:141px;top:740px" width="10" height="10" ><use href="#lk"/></svg>
<span class="t" style="left:158px;top:735.5px;transform-origin:0 0;transform:scaleX(0.9162);line-height:18px;letter-spacing:-0.120px;">EDService</span>
<div style="left:109px;top:764px;width:12px;height:1px;background:#8a8a8a;"></div>
<svg style="left:124px;top:757px" width="14" height="14" ><use href="#ic"/></svg>
<svg style="left:141px;top:760px" width="10" height="10" ><use href="#lk"/></svg>
<span class="t" style="left:158px;top:755.5px;transform-origin:0 0;transform:scaleX(0.9482);line-height:18px;letter-spacing:-0.120px;">Focus</span>
<span class="t" style="left:188.48296193531604px;top:755.5px;transform-origin:0 0;transform:scaleX(0.9562);line-height:18px;letter-spacing:-0.120px;">Service</span>
<div style="left:109px;top:784px;width:12px;height:1px;background:#8a8a8a;"></div>
<svg style="left:124px;top:777px" width="14" height="14" ><use href="#ic"/></svg>
<svg style="left:141px;top:780px" width="10" height="10" ><use href="#lk"/></svg>
<span class="t" style="left:158px;top:775.5px;transform-origin:0 0;transform:scaleX(0.9729);line-height:18px;color:#2b3bb5;letter-spacing:-0.120px;">SManager</span>
<svg style="left:84px;top:800px" width="9" height="9" ><use href="#bm"/></svg>
<div style="left:93px;top:804px;width:8px;height:1px;background:#8a8a8a;"></div>
<svg style="left:104px;top:798px" width="14" height="12" ><use href="#fp"/></svg>
<span class="t" style="left:122.5px;top:795.5px;transform-origin:0 0;transform:scaleX(0.9493);line-height:18px;letter-spacing:-0.120px;">vast</span>
<div style="left:109px;top:824px;width:12px;height:1px;background:#8a8a8a;"></div>
<svg style="left:124px;top:817px" width="14" height="14" ><use href="#ic"/></svg>
<svg style="left:141px;top:820px" width="10" height="10" ><use href="#lk"/></svg>
<span class="t" style="left:158px;top:815.5px;transform-origin:0 0;transform:scaleX(0.9893);line-height:18px;letter-spacing:-0.120px;">AMVBanner</span>
<div style="left:109px;top:844px;width:12px;height:1px;background:#8a8a8a;"></div>
<svg style="left:124px;top:837px" width="14" height="14" ><use href="#ic"/></svg>
<svg style="left:141px;top:840px" width="10" height="10" ><use href="#lk"/></svg>
<span class="t" style="left:158px;top:835.5px;line-height:18px;letter-spacing:-0.032px;">VastVideo</span>
<span class="t" style="left:211.33738742920806px;top:835.5px;line-height:18px;letter-spacing:0.102px;">Configuration</span>
<div style="left:109px;top:864px;width:12px;height:1px;background:#8a8a8a;"></div>
<svg style="left:124px;top:857px" width="14" height="14" ><use href="#ic"/></svg>
<svg style="left:141px;top:859px" width="10" height="10" ><use href="#dot"/></svg>
<span class="t" style="left:158px;top:855.5px;line-height:18px;letter-spacing:-0.089px;">VastVideo</span>
<span class="t" style="left:210.85553131816766px;top:855.5px;line-height:18px;letter-spacing:0.121px;">Toolbar</span>
<div style="left:109px;top:884px;width:12px;height:1px;background:#8a8a8a;"></div>
<svg style="left:124px;top:877px" width="14" height="14" ><use href="#ic"/></svg>
<svg style="left:141px;top:880px" width="10" height="10" ><use href="#lk"/></svg>
<span class="t" style="left:158px;top:875.5px;line-height:18px;letter-spacing:-0.092px;">VastVideo</span>
<span class="t" style="left:210.8260772692839px;top:875.5px;line-height:18px;letter-spacing:-0.047px;">ViewController</span>
<div style="left:109px;top:904px;width:12px;height:1px;background:#8a8a8a;"></div>
<svg style="left:124px;top:897px" width="14" height="14" ><use href="#ic"/></svg>
<svg style="left:141px;top:900px" width="10" height="10" ><use href="#lk"/></svg>
<span class="t" style="left:158px;top:895.5px;transform-origin:0 0;transform:scaleX(0.9947);line-height:18px;letter-spacing:-0.120px;">VastXml</span>
<span class="t" style="left:200.7906570617769px;top:895.5px;line-height:18px;letter-spacing:0.017px;">Downloader</span>
<div style="left:109px;top:924px;width:12px;height:1px;background:#8a8a8a;"></div>
<svg style="left:124px;top:917px" width="14" height="14" ><use href="#ic"/></svg>
<svg style="left:141px;top:920px" width="10" height="10" ><use href="#lk"/></svg>
<span class="t" style="left:158px;top:915.5px;transform-origin:0 0;transform:scaleX(0.9961);line-height:18px;letter-spacing:-0.120px;">VastXml</span>
<span class="t" style="left:200.84823284823284px;top:915.5px;line-height:18px;letter-spacing:-0.034px;">Manager</span>
<div style="left:109px;top:944px;width:12px;height:1px;background:#8a8a8a;"></div>
<svg style="left:124px;top:937px" width="14" height="14" ><use href="#ic"/></svg>
<svg style="left:141px;top:940px" width="10" height="10" ><use href="#lk"/></svg>
<span class="t" style="left:158px;top:935.5px;transform-origin:0 0;transform:scaleX(0.9923);line-height:18px;letter-spacing:-0.120px;">VastXml</span>
<span class="t" style="left:200.68565187492416px;top:935.5px;line-height:18px;letter-spacing:-0.062px;">Manager</span>
<span class="t" style="left:247.65850895999353px;top:935.5px;line-height:18px;letter-spacing:-0.107px;">Redirector</span>
<div style="left:109px;top:964px;width:12px;height:1px;background:#8a8a8a;"></div>
<svg style="left:124px;top:957px" width="14" height="14" ><use href="#ie"/></svg>
<svg style="left:141px;top:960px" width="10" height="10" ><use href="#lk"/></svg>
<span class="t" style="left:158px;top:955.5px;transform-origin:0 0;transform:scaleX(0.9932);line-height:18px;letter-spacing:-0.120px;">VersionCode</span>
<div style="left:109px;top:984px;width:12px;height:1px;background:#8a8a8a;"></div>
<svg style="left:124px;top:977px" width="14" height="14" ><use href="#ic"/></svg>
<svg style="left:141px;top:979px" width="10" height="10" ><use href="#dot"/></svg>
<span class="t" style="left:158px;top:975.5px;line-height:18px;">XmlUtils</span>
<div style="left:104px;top:997px;width:14px;height:1px;overflow:hidden"><svg style="left:0;top:0" width="14" height="14"><use href="#ic"/></svg></div>
<div style="left:467px;top:73px;width:1453px;height:21px;background:linear-gradient(#e4e4e4,#cbcbcb);"></div>
<div style="left:467px;top:93px;width:1453px;height:1px;background:#9e9e9e;"></div>
<div style="left:467px;top:94px;width:1453px;height:20px;background:linear-gradient(#e4e4e4,#cbcbcb);"></div>
<div style="left:467px;top:114px;width:1453px;height:1px;background:#9e9e9e;"></div>
<div style="left:467px;top:115px;width:1453px;height:3px;background:#f4f4f4;"></div>
<div style="left:467px;top:118px;width:1453px;height:1px;background:#c3c3c3;"></div>
<div style="left:811px;top:73px;width:1px;height:20px;background:#a3a3a3;"></div>
<svg style="left:570px;top:76px" width="14" height="14" ><use href="#ic"/></svg>
<span class="t" style="left:587.5px;top:75px;line-height:16px;font-size:11px;letter-spacing:-0.029px;">VastVideo</span>
<span class="t" style="left:636.3923940149626px;top:75px;line-height:16px;font-size:11px;letter-spacing:0.163px;">Toolbar</span>
<span class="t" style="left:673.5268079800499px;top:75px;transform-origin:0 0;transform:scaleX(0.9455);line-height:16px;font-size:11px;letter-spacing:-0.120px;">.java</span>
<svg style="left:796px;top:79.5px" width="7" height="7" ><use href="#cx"/></svg>
<div style="left:1189px;top:73px;width:1px;height:20px;background:#a3a3a3;"></div>
<svg style="left:916.5px;top:76px" width="14" height="14" ><use href="#ic"/></svg>
<span class="t" style="left:933.5px;top:75px;line-height:16px;font-size:11px;letter-spacing:-0.082px;">VastVideo</span>
<span class="t" style="left:981.9466270891628px;top:75px;line-height:16px;font-size:11px;letter-spacing:-0.041px;">ViewController</span>
<span class="t" style="left:1052.7225856462226px;top:75px;transform-origin:0 0;transform:scaleX(0.9369);line-height:16px;font-size:11px;letter-spacing:-0.120px;">.java</span>
<svg style="left:1173.5px;top:79.5px" width="7" height="7" ><use href="#cx"/></svg>
<div style="left:1580px;top:73px;width:1px;height:20px;background:#a3a3a3;"></div>
<svg style="left:1293px;top:76px" width="14" height="14" ><use href="#ic"/></svg>
<span class="t" style="left:1310.5px;top:75px;transform-origin:0 0;transform:scaleX(0.9948);line-height:16px;font-size:11px;letter-spacing:-0.120px;">VastXml</span>
<span class="t" style="left:1349.657836106663px;top:75px;line-height:16px;font-size:11px;letter-spacing:-0.051px;">Manager</span>
<span class="t" style="left:1392.748555315742px;top:75px;line-height:16px;font-size:11px;letter-spacing:-0.095px;">Redirector</span>
<span class="t" style="left:1442.5989173570981px;top:75px;transform-origin:0 0;transform:scaleX(0.9424);line-height:16px;font-size:11px;letter-spacing:-0.120px;">.java</span>
<svg style="left:1564.5px;top:79.5px" width="7" height="7" ><use href="#cx"/></svg>
<div style="left:1920px;top:73px;width:1px;height:20px;background:#a3a3a3;"></div>
<svg style="left:1684px;top:76px" width="14" height="14" ><use href="#ic"/></svg>
<span class="t" style="left:1701.5px;top:75px;transform-origin:0 0;transform:scaleX(0.9934);line-height:16px;font-size:11px;letter-spacing:-0.120px;">VastXml</span>
<span class="t" style="left:1740.601304325411px;top:75px;line-height:16px;font-size:11px;letter-spacing:-0.061px;">Manager</span>
<span class="t" style="left:1783.6298138887457px;top:75px;transform-origin:0 0;transform:scaleX(0.9410);line-height:16px;font-size:11px;letter-spacing:-0.120px;">.java</span>
<svg style="left:1904.5px;top:79.5px" width="7" height="7" ><use href="#cx"/></svg>
<div style="left:699px;top:94px;width:1px;height:20px;background:#a3a3a3;"></div>
<svg style="left:529px;top:97px" width="14" height="14" ><use href="#ic"/></svg>
<span class="t" style="left:546.5px;top:96px;line-height:16px;font-size:11px;letter-spacing:0.067px;">AMStorage</span>
<span class="t" style="left:602.0985393734123px;top:96px;transform-origin:0 0;transform:scaleX(0.9644);line-height:16px;font-size:11px;letter-spacing:-0.120px;">.java</span>
<svg style="left:684px;top:100.5px" width="7" height="7" ><use href="#cx"/></svg>
<div style="left:914px;top:94px;width:1px;height:20px;background:#a3a3a3;"></div>
<svg style="left:762px;top:97px" width="14" height="14" ><use href="#ic"/></svg>
<span class="t" style="left:780px;top:96px;line-height:16px;font-size:11px;color:#2a3fb0;letter-spacing:0.083px;">AMMob</span>
<span class="t" style="left:818.279638723255px;top:96px;transform-origin:0 0;transform:scaleX(0.9124);line-height:16px;font-size:11px;color:#2a3fb0;letter-spacing:-0.120px;">.java</span>
<svg style="left:898.5px;top:100.5px" width="7" height="7" ><use href="#cx"/></svg>
<div style="left:1142px;top:94px;width:1px;height:20px;background:#a3a3a3;"></div>
<svg style="left:977px;top:97px" width="14" height="14" ><use href="#ic"/></svg>
<span class="t" style="left:995.5px;top:96px;line-height:16px;font-size:11px;letter-spacing:-0.019px;">AdService</span>
<span class="t" style="left:1045.479058403785px;top:96px;transform-origin:0 0;transform:scaleX(0.9917);line-height:16px;font-size:11px;letter-spacing:-0.120px;">.java</span>
<svg style="left:1127px;top:100.5px" width="7" height="7" ><use href="#cx"/></svg>
<div style="left:1370px;top:94px;width:1px;height:20px;background:#a3a3a3;"></div>
<svg style="left:1205.5px;top:97px" width="14" height="14" ><use href="#icg"/></svg>
<span class="t" style="left:1224px;top:96px;line-height:16px;font-size:11px;color:#2a3fb0;letter-spacing:-0.060px;">AdService</span>
<span class="t" style="left:1273.6343752423795px;top:96px;transform-origin:0 0;transform:scaleX(0.9848);line-height:16px;font-size:11px;color:#2a3fb0;letter-spacing:-0.120px;">.java</span>
<svg style="left:1354.5px;top:100.5px" width="7" height="7" ><use href="#cx"/></svg>
<div style="left:1632px;top:94px;width:1px;height:20px;background:#a3a3a3;"></div>
<svg style="left:1433px;top:97px" width="14" height="14" ><use href="#icg"/></svg>
<span class="t" style="left:1451.5px;top:96px;transform-origin:0 0;transform:scaleX(0.9603);line-height:16px;font-size:11px;color:#2a3fb0;letter-spacing:-0.120px;">AMBase</span>
<span class="t" style="left:1490.7953834510595px;top:96px;line-height:16px;font-size:11px;color:#2a3fb0;letter-spacing:-0.058px;">WebView</span>
<span class="t" style="left:1536.4796922300707px;top:96px;transform-origin:0 0;transform:scaleX(0.9476);line-height:16px;font-size:11px;color:#2a3fb0;letter-spacing:-0.120px;">.java</span>
<svg style="left:1616.5px;top:100.5px" width="7" height="7" ><use href="#cx"/></svg>
<div style="left:1633px;top:94px;width:287px;height:24px;background:linear-gradient(#ffffff,#efefef);"></div>
<svg style="left:1695px;top:97px" width="14" height="14" ><use href="#ic"/></svg>
<span class="t" style="left:1712.5px;top:96px;transform-origin:0 0;transform:scaleX(0.9543);line-height:16px;font-size:11px;letter-spacing:-0.120px;">AMBase</span>
<span class="t" style="left:1751.548296136309px;top:96px;line-height:16px;font-size:11px;letter-spacing:-0.102px;">WebView</span>
<span class="t" style="left:1796.94534437245px;top:96px;line-height:16px;font-size:11px;letter-spacing:-0.083px;">Client</span>
<span class="t" style="left:1824.6150107991361px;top:96px;transform-origin:0 0;transform:scaleX(0.9417);line-height:16px;font-size:11px;letter-spacing:-0.120px;">.java</span>
<svg style="left:1904.5px;top:100.5px" width="7" height="7" ><use href="#cx"/></svg>
<div style="left:467px;top:119px;width:1433px;height:879px;background:#fff;"></div>
<div style="left:467px;top:119px;width:24px;height:879px;background:#f0f0f0;"></div>
<div style="left:467px;top:765px;width:1433px;height:17px;background:#ffffd7;"></div>
<div style="left:491px;top:119px;width:1px;height:879px;background:repeating-linear-gradient(#6a6a6a 0 1px,transparent 1px 2px)"></div>
<div style="left:1337px;top:119px;width:1px;height:879px;background:#cfcfcf;"></div>
<div style="left:1900px;top:119px;width:20px;height:879px;background:#f6f6f6;"></div>
<div style="left:1900px;top:119px;width:1px;height:879px;background:#e2e2e2;"></div>
<div style="left:1905px;top:121px;width:11px;height:11px;background:linear-gradient(135deg,#ffff30,#f4f400 70%,#b8b000);border:1px solid #d8d800;border-right-color:#8a8a00;border-bottom-color:#8a8a00;box-sizing:border-box"></div>
<div style="left:1911px;top:503px;width:9px;height:201px;background:linear-gradient(90deg,#cdcdcd,#dfdfdf);border:1px solid #bcbcbc;border-right:0;border-radius:2px 0 0 2px;box-sizing:border-box"></div>
<div style="left:1905px;top:596px;width:7px;height:3px;background:#f0f000;"></div>
<div class="gl" style="left:527px;top:187px;height:85px"></div>
<div class="gl" style="left:527px;top:340px;height:663px"></div>
<div class="gl" style="left:555px;top:561px;height:323px"></div>
<div class="gl" style="left:555px;top:901px;height:85px"></div>
<div class="gl" style="left:583px;top:629px;height:238px"></div>
<div class="gl" style="left:611px;top:765px;height:34px"></div>
<div class="gl" style="left:611px;top:816px;height:34px"></div>
<svg style="left:487px;top:122px" width="9" height="11" ><use href="#fe"/></svg>
<svg style="left:487px;top:175px" width="9" height="11" ><use href="#fb"/></svg>
<svg style="left:487px;top:275px" width="9" height="11" ><use href="#fe"/></svg>
<svg style="left:487px;top:328px" width="9" height="11" ><use href="#fb"/></svg>
<svg style="left:487px;top:685px" width="9" height="11" ><use href="#fb"/></svg>
<svg style="left:487px;top:700px" width="9" height="11" ><use href="#fe"/></svg>
<svg style="left:468px;top:171px" width="13" height="13" ><use href="#ov"/></svg>
<svg style="left:468px;top:324px" width="13" height="13" ><use href="#ov"/></svg>
<div style="left:467px;top:119px;width:1433px;height:879px;overflow:hidden">
<div class="cl" style="left:30px;top:2px">    }</div>
<div class="cl" style="left:30px;top:36px">    <span class="a">@Override</span></div>
<div class="cl" style="left:30px;top:53px">    <span class="k">public</span> <span class="k">void</span> onReceivedError(WebView view, <span class="k">int</span> errorCode, String description, String failingUrl) {</div>
<div class="cl" style="left:30px;top:70px">        <span class="k">super</span>.onReceivedError(view, errorCode, description, failingUrl);</div>
<div class="cl" style="left:30px;top:87px">        stopLoadingTimer();</div>
<div class="cl" style="left:30px;top:104px">        <span class="f">amBaseWebView</span>.onAdRequestError(<span class="f">amBaseWebView</span>.getLogPrefix() + <span class="s">"Error code: "</span> + errorCode + <span class="s">"; Description: "</span> + description);</div>
<div class="cl" style="left:30px;top:121px">        <span class="f">ignorePageFinished</span> = <span class="k">true</span>;</div>
<div class="cl" style="left:30px;top:138px">        <span class="f">amBaseWebView</span>.onAdNotDisplayed();</div>
<div class="cl" style="left:30px;top:155px">    }</div>
<div class="cl" style="left:30px;top:189px">    <span class="a">@Override</span></div>
<div class="cl" style="left:30px;top:206px">    <span class="k">public</span> <span class="k">boolean</span> shouldOverrideUrlLoading(WebView view, String url) {</div>
<div class="cl" style="left:30px;top:223px">        BaseBanner currentBanner = <span class="f">amBaseWebView</span>.getCurrentBanner();</div>
<div class="cl" style="left:30px;top:257px">        String company = currentBanner.getCompany();</div>
<div class="cl" style="left:30px;top:274px">        String name = currentBanner.getName();</div>
<div class="cl" style="left:30px;top:291px">        <span class="k">int</span> bannerId = currentBanner.getBannerId();</div>
<div class="cl" style="left:30px;top:308px">        <span class="k">int</span> layerId = currentBanner.getLayerId();</div>
<div class="cl" style="left:30px;top:342px">        AMLogging.<span class="i">debug</span>(<span class="s">"[ m ] "</span> + <span class="f">amBaseWebView</span>.getLogPrefix() + <span class="s">"Should Override Url Loading. State: "</span> + <span class="f">amBaseWebView</span>.getState() + <span class="s">", "</span> + company + <span class="s">":"</span> + name + <span class="s">", URL: "</span> + url);</div>
<div class="cl" style="left:30px;top:376px">        <span class="k">long</span> clickInterval = Math.<span class="i">abs</span>(System.<span class="i">currentTimeMillis</span>() - <span class="f">amBaseWebView</span>.getClickTime());</div>
<div class="cl" style="left:30px;top:410px">        Map&lt;String, String&gt; urlsMap = <span class="g">new HashMap&lt;&gt;()</span>;</div>
<div class="cl" style="left:30px;top:427px">        <span class="k">if</span> (url.startsWith(AMScheme.<span class="c">AM_SCHEME</span>) || url.startsWith(AMScheme.<span class="c">CHECKIMP_SCHEME</span>)) {</div>
<div class="cl" style="left:30px;top:444px">            urlsMap = parseScheme(url);</div>
<div class="cl" style="left:30px;top:461px">            <span class="f">amBaseWebView</span>.getAMTracer().setImpressionUrl(urlsMap.get(AMScheme.<span class="c">IMP_URL</span>));</div>
<div class="cl" style="left:30px;top:478px">            <span class="f">amBaseWebView</span>.getAMTracer().setClickUrl(urlsMap.get(AMScheme.<span class="c">CLICK_URL</span>));</div>
<div class="cl" style="left:30px;top:495px">            <span class="k">if</span> (urlsMap.containsKey(AMScheme.<span class="c">CHECKIMP</span>)) {</div>
<div class="cl" style="left:30px;top:512px">                stopLoadingTimer();</div>
<div class="cl" style="left:30px;top:529px">                <span class="f">amBaseWebView</span>.stopCheckImpression();</div>
<div class="cl" style="left:30px;top:563px">                <span class="cm">// При загрузке следующего баннера, если не завершилась загрузка текущего</span></div>
<div class="cl" style="left:30px;top:580px">                <span class="cm">// сначала произойдет onPageFinished текущего, а только потом начнется загрузка следующего</span></div>
<div class="cl" style="left:30px;top:597px">                <span class="f">ignorePageFinished</span> = <span class="k">true</span>;</div>
<div class="cl" style="left:30px;top:631px">                <span class="k">if</span> (Boolean.<span class="i">parseBoolean</span>(urlsMap.get(AMScheme.<span class="c">CHECKIMP</span>))) {</div>
<div class="cl cr" style="left:30px;top:648px">                    AMLogging.<span class="i">trace</span>(<span class="f">amBaseWebView</span>.getLogPrefix() + <span class="s">"Detect impression from Native JS"</span>);</div>
<div class="cl" style="left:30px;top:665px">                    <span class="f">amBaseWebView</span>.onAdDisplayed();</div>
<div class="cl" style="left:30px;top:682px">                } <span class="k">else</span> {</div>
<div class="cl" style="left:30px;top:699px">                    AMLogging.<span class="i">trace</span>(<span class="f">amBaseWebView</span>.getLogPrefix() + <span class="s">"Detect NO impression from Native JS"</span>);</div>
<div class="cl" style="left:30px;top:716px">                    <span class="f">amBaseWebView</span>.onAdNotDisplayed();</div>
<div class="cl" style="left:30px;top:733px">                }</div>
<div class="cl" style="left:30px;top:750px">            }</div>
<div class="cl" style="left:30px;top:767px">        } <span class="k">else</span> <span class="k">if</span> (clickInterval &lt; <span class="c">ALLOW_CLICK_INTERVAL_TIME</span>) {</div>
<div class="cl" style="left:30px;top:784px">            AMLogging.<span class="i">debug</span>(<span class="f">amBaseWebView</span>.getLogPrefix() + <span class="s">"Native click. URL: "</span> + url);</div>
<div class="cl" style="left:30px;top:801px">            <span class="f">amBaseWebView</span>.<span class="f">clickType</span> = Enums.ClickType.<span class="c">NATIVE</span>;</div>
<div class="cl" style="left:30px;top:818px">            <span class="f">amBaseWebView</span>.onAdClicked();</div>
<div class="cl" style="left:30px;top:835px">            AMStorage.<span class="i">putCU</span>(view.getContext(), bannerId, url);</div>
<div class="cl" style="left:30px;top:852px">            <span class="f">amBaseWebView</span>.openClickUrl(url);</div>
<div class="cl" style="left:30px;top:869px">        } <span class="k">else</span> {</div>
</div>
<div style="left:1218px;top:767px;width:2px;height:16px;background:#000;"></div>
<div style="left:0px;top:998px;width:1920px;height:1px;background:#a9a9a9;"></div>
<div style="left:0px;top:999px;width:1920px;height:20px;background:#f0f0f0;"></div>
<div style="left:0px;top:1019px;width:1920px;height:1px;background:#b4b4b4;"></div>
<div style="left:0px;top:1020px;width:1920px;height:20px;background:#f0f0f0;"></div>
<svg style="left:29px;top:1002px" width="14" height="14"><circle cx="8" cy="7" r="3.4" fill="#f1c8a0"/><path d="M4.6 6.4A3.4 3.4 0 0 1 11.4 6.4L10 5.5H6Z" fill="#5a4632"/><path d="M2.5 14A5.5 5 0 0 1 13.5 14Z" fill="#3f8fd0"/><ellipse cx="3" cy="2.8" rx="2.8" ry="2" fill="#fff" stroke="#777" stroke-width="0.8"/><path d="M1.6 2.3H4.4M1.6 3.3H4.4" stroke="#777" stroke-width="0.6"/></svg>
<span class="t" style="left:45.5px;top:1001px;transform-origin:0 0;transform:scaleX(0.9686);line-height:16px;font-size:11px;letter-spacing:-0.120px;"><u>6</u>: TODO</span>
<svg style="left:107px;top:1002px" width="14" height="14"><rect x="0.5" y="0.5" width="8" height="8" fill="#6ea8d6" stroke="#5a90bd"/><circle cx="8.5" cy="9" r="4.7" fill="#e8a85a"/><path d="M8.5 9L3.8 9A4.7 4.7 0 0 1 8.5 4.3Z" fill="#4cb04c"/><path d="M4 9A4.5 4.5 0 0 1 8.5 4.5V9Z" fill="#4cb04c"/></svg>
<span class="t" style="left:124.5px;top:1001px;transform-origin:0 0;transform:scaleX(0.9884);line-height:16px;font-size:11px;letter-spacing:-0.120px;"><u>9</u>: Changes</span>
<svg style="left:202px;top:1002px" width="14" height="14"><circle cx="7" cy="7" r="6" fill="#2f6fd0"/><path d="M7 7L7 1A6 6 0 0 1 12.2 10Z" fill="#d8342e"/><path d="M7 7L12.2 10A6 6 0 0 1 3 11.5Z" fill="#2c9c3c"/><circle cx="7" cy="7" r="6" fill="none" stroke="#333" stroke-opacity=".35" stroke-width=".8"/></svg>
<span class="t" style="left:220.5px;top:1001px;line-height:16px;font-size:11px;letter-spacing:-0.119px;">Statistic</span>
<svg style="left:278px;top:1002px" width="14" height="14" ><use href="#an"/></svg>
<span class="t" style="left:296px;top:1001px;transform-origin:0 0;transform:scaleX(0.9827);line-height:16px;font-size:11px;letter-spacing:-0.120px;">Android</span>
<svg style="left:354px;top:1002px" width="13" height="14"><g stroke="#9a86a8" stroke-width="0.9" fill="none"><path d="M6.5 5L1 1M6.5 5L12 1M6.5 7L0.5 6M6.5 7L12.5 6M6.5 8L1 11M6.5 8L12 11M6.5 9L3 13.5M6.5 9L10 13.5"/></g><ellipse cx="6.5" cy="5" rx="1.8" ry="2" fill="#a98dbb"/><ellipse cx="6.5" cy="9.5" rx="2.3" ry="3" fill="#b79ac8"/></svg>
<span class="t" style="left:371px;top:1001px;transform-origin:0 0;transform:scaleX(0.9649);line-height:16px;font-size:11px;letter-spacing:-0.120px;">Ant Build</span>
<svg style="left:1826px;top:1004px" width="12" height="12"><path d="M1.5 0.5H10.5Q11.5 0.5 11.5 1.5V7Q11.5 8 10.5 8H9.8L10 11L6.8 8H1.5Q0.5 8 0.5 7V1.5Q0.5 0.5 1.5 0.5Z" fill="#bcbcbc"/></svg>
<span class="t" style="left:1842.5px;top:1001px;transform-origin:0 0;transform:scaleX(0.9891);line-height:16px;font-size:11px;letter-spacing:-0.120px;">Event Log</span>
<svg style="left:5px;top:1023px" width="15" height="14"><rect x="0.5" y="0.5" width="13" height="10" fill="#c9c9c9" stroke="#6e6e6e"/><path d="M0 13.5H14" stroke="#6e6e6e"/></svg>
<div style="left:1627px;top:1020px;width:1px;height:20px;background:#c6c6c6;"></div>
<div style="left:1687px;top:1020px;width:1px;height:20px;background:#c6c6c6;"></div>
<div style="left:1732px;top:1020px;width:1px;height:20px;background:#c6c6c6;"></div>
<div style="left:1781px;top:1020px;width:1px;height:20px;background:#c6c6c6;"></div>
<div style="left:1870px;top:1020px;width:1px;height:20px;background:#c6c6c6;"></div>
<span class="t" style="left:1637px;top:1022px;line-height:16px;font-size:11px;letter-spacing:0.036px;">138:104</span>
<span class="t" style="left:1690.5px;top:1022px;transform-origin:0 0;transform:scaleX(0.8653);line-height:16px;font-size:11px;letter-spacing:-0.120px;">CRLF</span>
<svg style="left:1721px;top:1025px" width="6" height="10" ><use href="#ud"/></svg>
<span class="t" style="left:1735px;top:1022px;transform-origin:0 0;transform:scaleX(0.9467);line-height:16px;font-size:11px;letter-spacing:-0.120px;">UTF-8</span>
<svg style="left:1770px;top:1025px" width="6" height="10" ><use href="#ud"/></svg>
<span class="t" style="left:1784px;top:1022px;line-height:16px;font-size:11px;letter-spacing:-0.018px;">Git: develop</span>
<svg style="left:1859px;top:1025px" width="6" height="10" ><use href="#ud"/></svg>
<svg style="left:1877px;top:1025px" width="10" height="10"><path d="M0.8 3.2V2.6A2 2 0 0 1 4.8 2.6V4.2" fill="none" stroke="#9a9a9a" stroke-width="1.2"/><rect x="2.6" y="4" width="7" height="5.6" rx="1.2" fill="#9a9a9a"/><path d="M4.6 5.5H7.6L6.6 6.6V8.4H5.6V6.6Z" fill="#fff"/></svg>
<svg style="left:1898px;top:1022px" width="15" height="16"><g fill="none" stroke="#7a7a7a" stroke-width="1.1"><path d="M4 5V3.5Q4 1 7.5 1Q11 1 11 3.5V5"/><path d="M1.5 5.5H13.5"/><path d="M3.5 6V9.5Q3.5 12.5 7.5 12.5Q11.5 12.5 11.5 9.5V6"/><path d="M4 12L2.5 15.5M11 12L12.5 15.5M5.5 10.3Q7.5 8.8 9.5 10.3"/></g><circle cx="5.8" cy="7.8" r="0.9" fill="#7a7a7a"/><circle cx="9.2" cy="7.8" r="0.9" fill="#7a7a7a"/></svg>
<div style="left:0;top:1040px;width:1920px;height:40px;background:#248354;overflow:hidden"><div style="left:0;top:0;width:1480px;height:40px;background:linear-gradient(90deg,#248354 0%,#248354 52%,#288b5c 85%,#298a5c 100%)"></div><div style="left:782px;top:0;width:598px;height:40px;background:linear-gradient(90deg,rgba(76,164,123,0) 0,rgba(76,164,123,.9) 2.5%,rgba(74,163,121,.95) 20%,rgba(62,154,110,.8) 45%,rgba(48,146,100,.6) 70%,rgba(41,138,92,0) 100%);transform:skewX(-48.4deg)"></div><div style="left:1424px;top:0;width:17px;height:40px;background:linear-gradient(90deg,#2a8b5c,#6fa88f);transform:skewX(-48.4deg)"></div><div style="left:1440px;top:0;width:33px;height:40px;background:linear-gradient(90deg,#7db39b,#74ab92 60%,#6a9f87);transform:skewX(-48.4deg)"></div><div style="left:1472px;top:0;width:18px;height:40px;background:#436f56;transform:skewX(-48.4deg)"></div><div style="left:1489px;top:0;width:20px;height:40px;background:#4e8067;transform:skewX(-48.4deg)"></div><div style="left:1508px;top:0;width:124px;height:40px;background:linear-gradient(90deg,#669e86,#6ba28a 40%,#659c85);transform:skewX(-48.4deg)"></div><div style="left:1631px;top:0;width:19px;height:40px;background:#3f6f54;transform:skewX(-48.4deg)"></div><div style="left:1649px;top:0;width:19px;height:40px;background:#4b7d63;transform:skewX(-48.4deg)"></div><div style="left:1667px;top:0;width:85px;height:40px;background:linear-gradient(90deg,#6a9f89,#5f957d 35%,#568f76 60%,#5d967e 85%,#6ea58d 100%);transform:skewX(-48.4deg)"></div><div style="left:1751px;top:0;width:239px;height:40px;background:linear-gradient(90deg,#33905f,#2b8a59 25%,#26854f 60%,#248354 100%);transform:skewX(-48.4deg)"></div></div>
<svg style="left:12px;top:1047px" width="26" height="25"><path d="M0 3.6L10.6 2.1V11.9H0ZM11.9 1.9L26 0V11.9H11.9ZM0 13.1H10.6V22.9L0 21.4ZM11.9 13.1H26V25L11.9 23.1Z" fill="#fff"/></svg>
<svg style="left:65px;top:1047px" width="32" height="28"><path d="M1 4Q1 2 3 2H11L13 5H29Q31 5 31 7V22H1Z" fill="#e8c66a" stroke="#c9a444" stroke-width="0.8"/><path d="M1 9H31V22Q31 24 29 24H3Q1 24 1 22Z" fill="#f5df95"/><path d="M6 16H26V28H21V22H11V28H6Z" fill="#7db7e8" stroke="#4f92cf" stroke-width="0.8"/><rect x="6" y="16" width="20" height="4" fill="#a9d2f3"/><rect x="4" y="3" width="3" height="2" fill="#3a9a3a"/><rect x="12" y="6" width="3" height="2" fill="#d23b3b"/><rect x="20" y="7" width="4" height="2" fill="#3b7fd2"/></svg>
<div style="left:114px;top:1041px;width:58px;height:38px;background:linear-gradient(#e8d45c,#e2a64a);border:1px solid #d9c06a;box-sizing:border-box"></div>
<svg style="left:127px;top:1044px" width="32" height="32"><circle cx="16" cy="16" r="15.5" fill="#5fae3a"/><circle cx="16" cy="13" r="13" fill="#7cc24e" opacity=".55"/><path d="M10 8H14V18Q14 21 17 21Q20 21 20 18V8H24V24H20.5V22.5Q19 24.5 16 24.5Q14.5 24.5 14 24V30H10Z" fill="#fff"/></svg>
<div style="left:176px;top:1041px;width:58px;height:38px;background:#4f9a76;border:1px solid #78b598;box-sizing:border-box"></div>
<svg style="left:190px;top:1045px" width="30" height="30"><circle cx="15" cy="15" r="14.5" fill="#dd4b3e"/><path d="M15 15L2.5 7.8A14.5 14.5 0 0 0 12 29.2Z" fill="#4aae4e"/><path d="M15 15L12 29.2A14.5 14.5 0 0 0 27.6 7.8L15 7.8Z" fill="#f6cf3c"/><path d="M2.4 7.8A14.5 14.5 0 0 1 27.6 7.8L15 7.8Z" fill="#dd4b3e"/><circle cx="15" cy="15" r="6.8" fill="#fff"/><circle cx="15" cy="15" r="5.3" fill="#4a8fe0"/></svg>
<div style="left:237px;top:1041px;width:59px;height:38px;background:linear-gradient(#8cbfa7,#6fae92);border:1px solid #b4d8c6;box-sizing:border-box"></div>
<svg style="left:252px;top:1045px" width="32" height="32"><g fill="none" stroke="#1a80c6" stroke-linecap="round" stroke-linejoin="round"><path d="M5 4.5H18V20Q18 27 9 27H5" stroke-width="7"/><path d="M26.5 4.5V27.5" stroke-width="5.4"/></g><g fill="none" stroke="#3fa9ea" stroke-linecap="round" stroke-linejoin="round"><path d="M6 4H17V20Q17 25.5 9 26" stroke-width="3.4"/><path d="M26.2 5V27" stroke-width="2.4"/></g><circle cx="5.5" cy="15.5" r="3.9" fill="#e97a12"/><circle cx="5" cy="14.6" r="2" fill="#ffb65a"/></svg>
<svg style="left:1681px;top:1053px" width="16" height="17"><rect x="0.5" y="0.5" width="15" height="15" rx="1" fill="#3a8fd6" stroke="#9cc9ee"/><rect x="4" y="3" width="8" height="5" fill="#dff" opacity=".85"/><path d="M3 11H13M3 13H10" stroke="#fff" stroke-width="1.2"/><path d="M0 14L6 17H0Z" fill="#e8b13a"/></svg>
<svg style="left:1705px;top:1053px" width="17" height="16"><rect width="17" height="16" rx="2" fill="#d2232f"/><path d="M8.5 2.5C4 3.5 2.5 8 4.5 11.5C6.5 14.5 11 14 12.5 11C14 7.5 12 4.5 9.5 5C6.5 5.5 6 9.5 8 10.5" fill="none" stroke="#fff" stroke-width="1.6"/></svg>
<svg style="left:1730px;top:1053px" width="15" height="16"><path d="M1.5 0V5M4.5 0V5M0 5H6V8Q6 9.5 3 9.5Q0 9.5 0 8ZM3 9.5V16" fill="none" stroke="#fff" stroke-width="1.3"/><rect x="7.5" y="2.5" width="6.5" height="13" rx="1" fill="none" stroke="#fff" stroke-width="1.3"/><rect x="9.5" y="0.5" width="2.5" height="2" fill="#fff"/><rect x="9" y="5" width="3.5" height="9" fill="#fff"/></svg>
<svg style="left:1753px;top:1053px" width="16" height="16"><rect x="4.5" y="1.5" width="11" height="8" fill="none" stroke="#fff" stroke-width="1.3"/><path d="M10 9.5V13M6 13.5H14" stroke="#fff" stroke-width="1.3"/><rect x="0.5" y="3.5" width="3.5" height="9" fill="#fff"/><path d="M2 12V15.5H6" stroke="#fff" fill="none"/></svg>
<svg style="left:1777px;top:1053px" width="15" height="16"><path d="M0.5 5.5H3.5L7.5 1.5V14.5L3.5 10.5H0.5Z" fill="#fff"/><path d="M9.5 5.5Q11 8 9.5 10.5M11.5 3.5Q14.5 8 11.5 12.5" fill="none" stroke="#fff" stroke-width="1.1"/></svg>
<span class="t" style="left:1808px;top:1052px;transform-origin:0 0;transform:scaleX(0.8849);line-height:16px;color:#fff;letter-spacing:-0.120px;">РУС</span>
<span class="t" style="left:1860.5px;top:1044.5px;transform-origin:0 0;transform:scaleX(0.9325);line-height:16px;color:#fff;letter-spacing:-0.120px;">21:07</span>
<span class="t" style="left:1846.5px;top:1061px;transform-origin:0 0;transform:scaleX(0.9240);line-height:16px;color:#fff;letter-spacing:-0.120px;">07.08</span>
<span class="t" style="left:1873.75px;top:1061px;transform-origin:0 0;transform:scaleX(0.9240);line-height:16px;color:#fff;letter-spacing:-0.120px;">.2014</span>
</body></html>
